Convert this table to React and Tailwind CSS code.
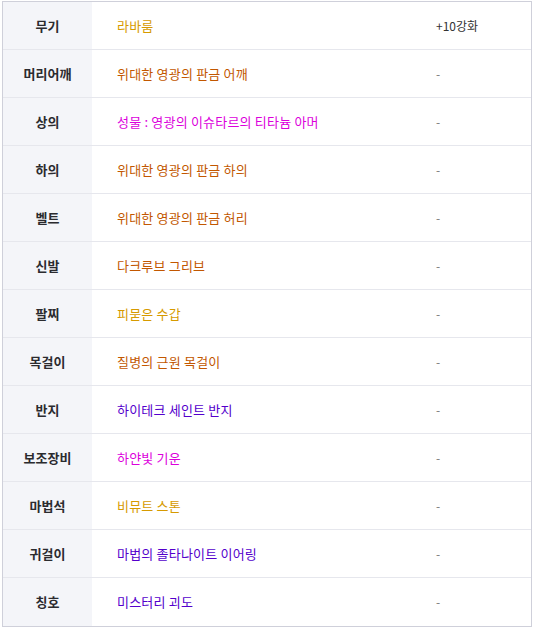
const YELLOW = 'text-[#d69a00]';
const ORANGE = 'text-[#c25700]';
const PINK = 'text-[#dc00dc]';
const PURPLE = 'text-[#5400cc]';

const rows = [
  { slot: '무기', item: '라바룸', color: YELLOW, extra: '+10강화' },
  { slot: '머리어깨', item: '위대한 영광의 판금 어깨', color: ORANGE },
  { slot: '상의', item: '성물 : 영광의 이슈타르의 티타늄 아머', color: PINK },
  { slot: '하의', item: '위대한 영광의 판금 하의', color: ORANGE },
  { slot: '벨트', item: '위대한 영광의 판금 허리', color: ORANGE },
  { slot: '신발', item: '다크루브 그리브', color: ORANGE },
  { slot: '팔찌', item: '피묻은 수갑', color: YELLOW },
  { slot: '목걸이', item: '질병의 근원 목걸이', color: ORANGE },
  { slot: '반지', item: '하이테크 세인트 반지', color: PURPLE },
  { slot: '보조장비', item: '하얀빛 기운', color: PINK },
  { slot: '마법석', item: '비뮤트 스톤', color: YELLOW },
  { slot: '귀걸이', item: '마법의 졸타나이트 이어링', color: PURPLE },
  { slot: '칭호', item: '미스터리 괴도', color: PURPLE },
];

function Row({ row, last }) {
  return (
    <div
      className={`grid h-[48px] grid-cols-[89px_319px_1fr] ${last ? '' : 'border-b border-[#e6e7ed]'}`}
    >
      <div className="flex items-center justify-center bg-[#f4f5f9] text-[13px] font-bold text-[#2b2b2f]">
        {row.slot}
      </div>
      <div className={`flex items-center pl-[25px] text-[13px] tracking-[0.2px] ${row.color}`}>
        {row.item}
      </div>
      <div className="flex items-center pl-[25px] text-[12px] text-[#333]">
        {row.extra ? row.extra : <span className="text-[#777]">-</span>}
      </div>
    </div>
  );
}

export default function App() {
  return (
    <div className="h-[630px] w-[534px] bg-white pl-[2px] pt-[1px] font-['Noto_Sans_CJK_KR','Noto_Sans',sans-serif]">
      <div className="h-[626px] w-[530px] border border-[#cfd0da] bg-white">
        {rows.map((row, i) => (
          <Row key={row.slot} row={row} last={i === rows.length - 1} />
        ))}
      </div>
    </div>
  );
}
